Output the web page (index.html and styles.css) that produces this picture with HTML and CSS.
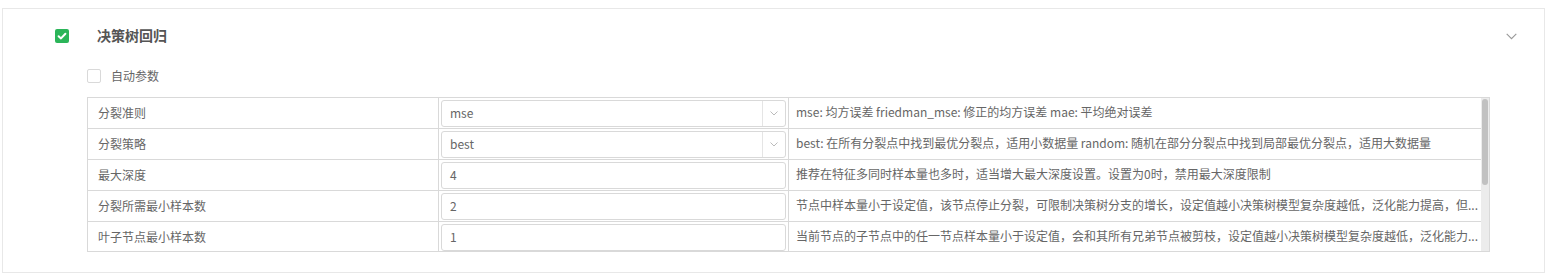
FILE: index.html
```html
<!DOCTYPE html>
<html lang="zh-CN">
<head>
<meta charset="utf-8">
<title>决策树回归</title>
<link rel="stylesheet" href="styles.css">
</head>
<body>
<div class="page">
  <section class="card">
    <header class="card-head">
      <span class="check checked">
        <svg viewBox="0 0 14 14" width="14" height="14"><path d="M3.6 7.2 L6 9.4 L10.4 4.8" fill="none" stroke="#fff" stroke-width="2" stroke-linecap="round" stroke-linejoin="round"/></svg>
      </span>
      <span class="title">决策树回归</span>
      <span class="toggle">
        <svg viewBox="0 0 11 7" width="11" height="7"><path d="M0.7 0.8 L5.5 5.6 L10.3 0.8" fill="none" stroke="#999" stroke-width="1.1"/></svg>
      </span>
    </header>
    <div class="card-body">
      <label class="auto">
        <span class="check"></span>
        <span class="auto-text">自动参数</span>
      </label>
      <div class="table-wrap">
        <div class="rows">
          <div class="row">
            <div class="cell name">分裂准则</div>
            <div class="cell value">
              <div class="select"><span class="select-text">mse</span><span class="select-arrow"><svg viewBox="0 0 8 5" width="8" height="5"><path d="M0.5 0.5 L4 4 L7.5 0.5" fill="none" stroke="#bbb" stroke-width="1"/></svg></span></div>
            </div>
            <div class="cell desc">mse: 均方误差 friedman_mse: 修正的均方误差 mae: 平均绝对误差</div>
          </div>
          <div class="row">
            <div class="cell name">分裂策略</div>
            <div class="cell value">
              <div class="select"><span class="select-text">best</span><span class="select-arrow"><svg viewBox="0 0 8 5" width="8" height="5"><path d="M0.5 0.5 L4 4 L7.5 0.5" fill="none" stroke="#bbb" stroke-width="1"/></svg></span></div>
            </div>
            <div class="cell desc">best: 在所有分裂点中找到最优分裂点，适用小数据量 random: 随机在部分分裂点中找到局部最优分裂点，适用大数据量</div>
          </div>
          <div class="row">
            <div class="cell name">最大深度</div>
            <div class="cell value"><div class="input">4</div></div>
            <div class="cell desc">推荐在特征多同时样本量也多时，适当增大最大深度设置。设置为0时，禁用最大深度限制</div>
          </div>
          <div class="row">
            <div class="cell name">分裂所需最小样本数</div>
            <div class="cell value"><div class="input">2</div></div>
            <div class="cell desc" title="节点中样本量小于设定值，该节点停止分裂，可限制决策树分支的增长，设定值越小决策树模型复杂度越低，泛化能力提高，但容易欠拟合">节点中样本量小于设定值，该节点停止分裂，可限制决策树分支的增长，设定值越小决策树模型复杂度越低，泛化能力提高，但...</div>
          </div>
          <div class="row">
            <div class="cell name">叶子节点最小样本数</div>
            <div class="cell value"><div class="input">1</div></div>
            <div class="cell desc" title="当前节点的子节点中的任一节点样本量小于设定值，会和其所有兄弟节点被剪枝，设定值越小决策树模型复杂度越低，泛化能力提高，但容易欠拟合">当前节点的子节点中的任一节点样本量小于设定值，会和其所有兄弟节点被剪枝，设定值越小决策树模型复杂度越低，泛化能力...</div>
          </div>
        </div>
        <div class="scrollbar" aria-hidden="true"><div class="thumb"></div></div>
      </div>
    </div>
  </section>
</div>
</body>
</html>
```
FILE: styles.css
```css
* { box-sizing: border-box; }
html, body { margin: 0; padding: 0; background: #fff; }
body {
  font-family: "Noto Sans CJK SC", "Noto Sans", sans-serif;
  font-size: 12px;
  color: #666;
}
.page {
  padding: 8px 14px 6px 2px;
}
.card {
  border: 1px solid #e8e8e8;
  background: #fff;
  padding: 0 54px 20px 0;
}
.card-head {
  height: 54px;
  display: flex;
  align-items: center;
  padding-left: 52px;
}
.check {
  width: 14px;
  height: 14px;
  border: 1px solid #d9d9d9;
  border-radius: 2px;
  background: #fff;
  display: inline-flex;
  flex: none;
}
.check.checked {
  border: none;
  background: #2bb559;
}
.check svg { display: block; }
.title {
  margin-left: 28px;
  font-size: 14px;
  font-weight: bold;
  color: #555;
  flex: 1;
  padding-bottom: 2px;
}
.toggle {
  display: flex;
  margin-right: -27px;
}
.card-body {
  padding-left: 84px;
}
.auto {
  display: flex;
  align-items: center;
  height: 14px;
  margin-top: 6px;
}
.auto-text {
  margin-left: 10px;
  color: #666;
  padding-bottom: 2px;
}
.table-wrap {
  margin-top: 14px;
  border: 1px solid #d9d9d9;
  height: 155px;
  display: flex;
  overflow: hidden;
}
.rows {
  flex: 1;
  min-width: 0;
}
.scrollbar {
  width: 8px;
  flex: none;
  background: #ececec;
  padding: 1px 1px 0 1px;
}
.thumb {
  height: 86px;
  background: #c1c1c1;
  border-radius: 3px;
}
.row {
  display: grid;
  grid-template-columns: 351px 350px 1fr;
  height: 31px;
  border-bottom: 1px solid #d9d9d9;
}
.cell {
  display: flex;
  align-items: center;
  min-width: 0;
}
.name {
  padding-left: 10px;
  padding-bottom: 2px;
  border-right: 1px solid #d9d9d9;
}
.value {
  padding: 0 2px 0 2px;
  border-right: 1px solid #d9d9d9;
}
.desc {
  padding-left: 7px;
  padding-right: 4px;
  display: block;
  line-height: 28px;
  white-space: nowrap;
  overflow: hidden;
}
.select, .input {
  width: 100%;
  height: 27px;
  border: 1px solid #d9d9d9;
  border-radius: 3px;
  display: flex;
  align-items: center;
  color: #666;
}
.input { padding-left: 8px; padding-bottom: 2px; }
.select-text { flex: 1; padding-left: 8px; padding-bottom: 2px; }
.select-arrow {
  width: 23px;
  height: 100%;
  border-left: 1px solid #e5e5e5;
  display: flex;
  align-items: center;
  justify-content: center;
}
.select-arrow svg { display: block; }
```
